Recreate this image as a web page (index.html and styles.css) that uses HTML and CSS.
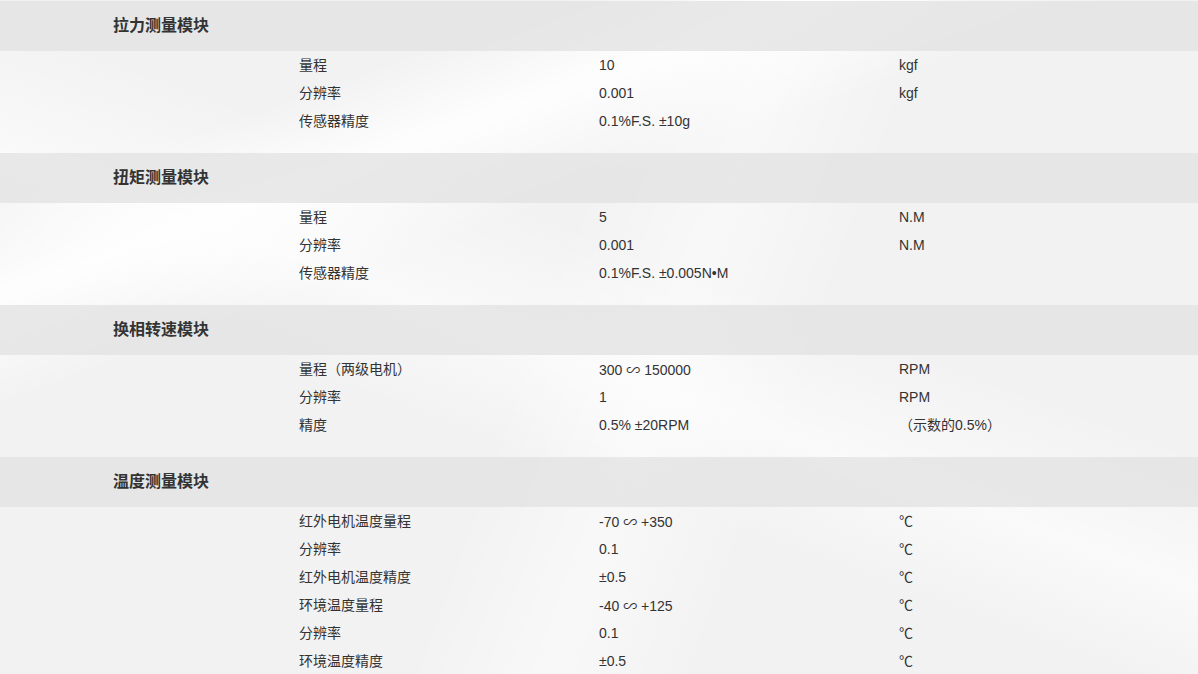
FILE: index.html
```html
<!DOCTYPE html>
<html lang="zh-CN">
<head>
  <meta charset="UTF-8">
  <meta name="viewport" content="width=device-width, initial-scale=1.0">
  <title>测量模块参数</title>
  <link rel="stylesheet" href="styles.css">
</head>
<body>
  <div class="page">
    <div class="module">
      <h3 class="module-title">拉力测量模块</h3>
      <div class="spec-list">
        <div class="spec-row"><span>量程</span><span>10</span><span>kgf</span></div>
        <div class="spec-row"><span>分辨率</span><span>0.001</span><span>kgf</span></div>
        <div class="spec-row"><span>传感器精度</span><span>0.1%F.S. ±10g</span><span></span></div>
      </div>
    </div>

    <div class="module">
      <h3 class="module-title">扭矩测量模块</h3>
      <div class="spec-list">
        <div class="spec-row"><span>量程</span><span>5</span><span>N.M</span></div>
        <div class="spec-row"><span>分辨率</span><span>0.001</span><span>N.M</span></div>
        <div class="spec-row"><span>传感器精度</span><span>0.1%F.S. ±0.005N•M</span><span></span></div>
      </div>
    </div>

    <div class="module">
      <h3 class="module-title">换相转速模块</h3>
      <div class="spec-list">
        <div class="spec-row"><span>量程（两级电机）</span><span>300 <i class="range">∽</i> 150000</span><span>RPM</span></div>
        <div class="spec-row"><span>分辨率</span><span>1</span><span>RPM</span></div>
        <div class="spec-row"><span>精度</span><span>0.5% ±20RPM</span><span>（示数的0.5%）</span></div>
      </div>
    </div>

    <div class="module">
      <h3 class="module-title">温度测量模块</h3>
      <div class="spec-list">
        <div class="spec-row"><span>红外电机温度量程</span><span>-70 <i class="range">∽</i> +350</span><span>℃</span></div>
        <div class="spec-row"><span>分辨率</span><span>0.1</span><span>℃</span></div>
        <div class="spec-row"><span>红外电机温度精度</span><span>±0.5</span><span>℃</span></div>
        <div class="spec-row"><span>环境温度量程</span><span>-40 <i class="range">∽</i> +125</span><span>℃</span></div>
        <div class="spec-row"><span>分辨率</span><span>0.1</span><span>℃</span></div>
        <div class="spec-row"><span>环境温度精度</span><span>±0.5</span><span>℃</span></div>
      </div>
    </div>
  </div>
</body>
</html>
```

FILE: styles.css
```css
html, body {
  margin: 0;
  padding: 0;
}

body {
  font-family: "Liberation Sans", Arial, "Noto Sans CJK SC", sans-serif;
  font-size: 14px;
  color: #333;
  background-color: #f2f2f2;
  background-image:
    linear-gradient(160deg, rgba(255,255,255,0) 0%, rgba(255,255,255,0) 18%, rgba(255,255,255,0.9) 26%, rgba(255,255,255,0) 36%),
    linear-gradient(200deg, rgba(255,255,255,0) 40%, rgba(255,255,255,0.6) 52%, rgba(255,255,255,0) 62%),
    linear-gradient(110deg, rgba(255,255,255,0) 45%, rgba(255,255,255,0.5) 55%, rgba(255,255,255,0) 65%);
  min-height: 674px;
  overflow: hidden;
}

.page {
  padding-top: 1px;
}

.module-title {
  margin: 0;
  height: 50px;
  line-height: 50px;
  padding-left: 113px;
  font-size: 16px;
  font-weight: bold;
  color: #333;
  background-color: rgba(225, 225, 225, 0.75);
}

.spec-list {
  padding: 0 0 18px 299px;
}

.spec-row {
  display: grid;
  grid-template-columns: 300px 300px 1fr;
  height: 28px;
  line-height: 28px;
}

/* range sign comes from the CJK font in the original */
.range {
  font-style: normal;
  font-family: "Noto Sans CJK SC", sans-serif;
}
```
